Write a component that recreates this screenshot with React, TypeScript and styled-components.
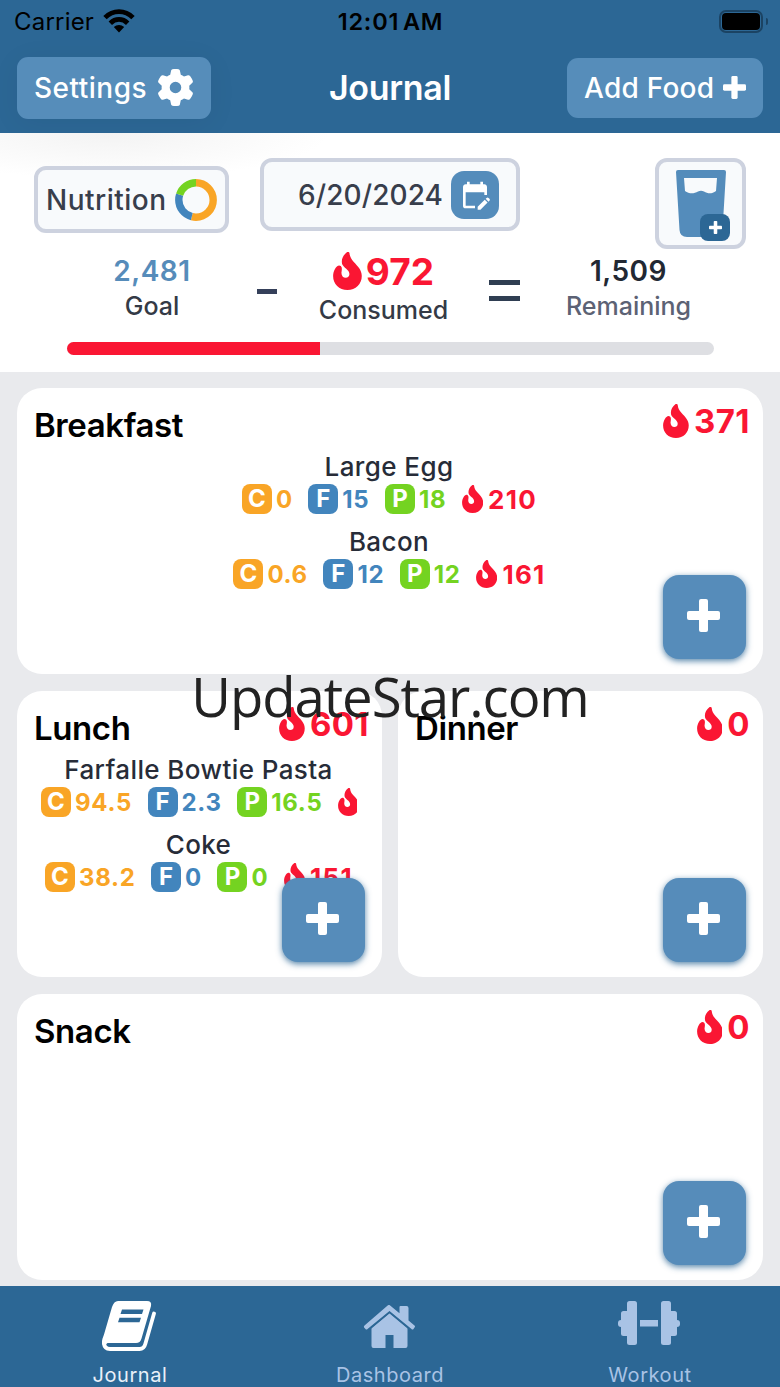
import React from "react";
import styled, { createGlobalStyle } from "styled-components";
import { FaGear } from "react-icons/fa6";
import { MdEditCalendar } from "react-icons/md";

const MEALS = [
  {
    name: "Breakfast",
    total: "371",
    wide: true,
    foods: [
      { name: "Large Egg", c: "0", f: "15", p: "18", kcal: "210" },
      { name: "Bacon", c: "0.6", f: "12", p: "12", kcal: "161" },
    ],
  },
  {
    name: "Lunch",
    total: "601",
    foods: [
      { name: "Farfalle Bowtie Pasta", c: "94.5", f: "2.3", p: "16.5", kcal: "450" },
      { name: "Coke", c: "38.2", f: "0", p: "0", kcal: "151" },
    ],
  },
  { name: "Dinner", total: "0", foods: [] },
  { name: "Snack", total: "0", wide: true, foods: [] },
];

const Plus: React.FC<{ size: number }> = ({ size }) => (
  <svg width={size} height={size} viewBox="0 0 33 33" fill="currentColor">
    <rect x="12" width="9" height="33" rx="2" />
    <rect y="12" width="33" height="9" rx="2" />
  </svg>
);

const Flame: React.FC<{ size: number }> = ({ size }) => (
  <svg width={size * 0.76} height={size} viewBox="0 0 86 114" fill="currentColor">
    <path d="M42 0C29 10 24 23 27 36C31 47 49 53 49 66C49 73 44 77 38 77C30 77 25 71 25 62C26 54 28 47 23 42C17 37 10 43 6 50C2 57 0 64 0 72C0 96 18 114 43 114C68 114 86 96 86 72C86 54 74 43 62 30C54 21 50 13 49 3C48 0 45-1 42 0Z" />
  </svg>
);

const Wifi = () => (
  <svg width="32" height="24" viewBox="0 0 32 24">
    <g fill="none" stroke="#000" strokeWidth="4.800">
      <path d="M2 8.600C10 .6 22 .6 30 8.600" />
      <path d="M7.300 14.200C12.300 9.200 19.700 9.200 24.700 14.200" />
    </g>
    <path d="M10.800 18C13.800 15.200 18.200 15.200 21.200 18L16 23.500Z" />
  </svg>
);

const Donut = () => (
  <svg width="42" height="42" viewBox="0 0 42 42" fill="none" strokeWidth="7.400">
    <g transform="rotate(-90 21 21)">
      <circle cx="21" cy="21" r="17.200" stroke="#f9a526" pathLength="100" strokeDasharray="54 46" />
      <circle cx="21" cy="21" r="17.200" stroke="#4285bd" pathLength="100" strokeDasharray="26 74" strokeDashoffset="-54" />
      <circle cx="21" cy="21" r="17.200" stroke="#74d321" pathLength="100" strokeDasharray="20 80" strokeDashoffset="-80" />
    </g>
  </svg>
);

const Glass = () => (
  <svg width="50" height="67" viewBox="0 0 50 67" fill="#548cbb">
    <path
      fillRule="evenodd"
      d="M2 0H48Q50 0 50 2L46.500 60Q46 67 39 67H11Q4 67 3.500 60L0 2Q0 0 2 0ZM8 8L9 21C13 24 18 24 22 21.500Q25 20 28 21.500C32 24 36 24 40 21L41 8Z"
    />
  </svg>
);

const JournalIcon = () => (
  <svg width="54" height="50" viewBox="0 0 54 50">
    <path
      fill="#fff"
      fillRule="evenodd"
      d="M16 0H45Q50 0 49 5L39.500 37.500Q38.300 42 34 42H5.500Q3.500 43 4 45L2 46Q0 44 0 41Q0 38 2 33.500L10 6Q12 0 16 0ZM20 8.500L18.500 13H40L41.500 8.500ZM17.500 16.800L16 21.200H37.500L39 16.800Z"
    />
    <path
      d="M52 12.500L43.300 43Q42 48 37.500 48H8Q2 48 1.800 41"
      fill="none"
      stroke="#fff"
      strokeWidth="3.800"
      strokeLinecap="round"
    />
  </svg>
);

const HomeIcon = () => (
  <svg width="53" height="43" viewBox="0 0 52 43" fill="currentColor">
    <path d="M26 8L44 23V41Q44 43 42 43H30V30H22V43H10Q8 43 8 41V23Z" />
    <path d="M26 0L36 8.300V2Q36 1 37 1H43Q45 1 45 3V15.500L51 20.500Q52 21.500 51 22.500L50 24Q49 25 48 24L26 6L4 24Q3 25 2 24L.6 22.500Q0 21.500 1 20.500L23 1.500Q26-1 26 0Z" />
    <path d="M5 25L26 7.500L47 25" fill="none" stroke="#2c6795" strokeWidth="1.500" />
  </svg>
);

const DumbbellIcon = () => (
  <svg width="62" height="44" viewBox="0 0 62 44" fill="currentColor">
    <rect x="9" width="10" height="44" rx="2.500" />
    <rect x="3" y="10" width="9" height="25" rx="2.500" />
    <rect y="19" width="6" height="7" rx="3" />
    <rect x="22" y="19" width="18" height="6.500" />
    <rect x="43" width="10" height="44" rx="2.500" />
    <rect x="50" y="10" width="9" height="25" rx="2.500" />
    <rect x="56" y="19" width="6" height="7" rx="3" />
  </svg>
);

export default function App() {
  return (
    <Screen>
      <GlobalStyle />
      <StatusBar>
        <Carrier>
          Carrier <Wifi />
        </Carrier>
        <Clock>12:01 AM</Clock>
        <Battery>
          <BatteryBody />
          <BatteryTip />
        </Battery>
      </StatusBar>
      <NavBar>
        <SettingsButton>
          Settings <FaGear size={37} />
        </SettingsButton>
        <NavTitle>Journal</NavTitle>
        <AddFoodButton>
          Add Food <Plus size={23} />
        </AddFoodButton>
      </NavBar>
      <Summary>
        <Tools>
          <NutritionButton>
            Nutrition <Donut />
          </NutritionButton>
          <DateButton>
            6/20/2024
            <CalendarBadge>
              <MdEditCalendar size={32} />
            </CalendarBadge>
          </DateButton>
          <WaterButton>
            <Glass />
            <WaterPlus>
              <Plus size={13} />
            </WaterPlus>
          </WaterButton>
        </Tools>
        <Equation>
          <Stat>
            <StatValue $color="#568cba">2,481</StatValue>
            <StatLabel>Goal</StatLabel>
          </Stat>
          <Minus />
          <Stat>
            <Consumed>
              <Flame size={38} />
              972
            </Consumed>
            <StatLabel>Consumed</StatLabel>
          </Stat>
          <Equals />
          <Stat>
            <StatValue $color="#222833">1,509</StatValue>
            <StatLabel $muted>Remaining</StatLabel>
          </Stat>
        </Equation>
        <Track>
          <Fill style={{ width: `${(972 / 2481) * 100}%` }} />
        </Track>
      </Summary>
      <Meals>
        {MEALS.map((meal) => (
          <Card key={meal.name} $wide={meal.wide}>
            <CardHeader>
              <MealName>{meal.name}</MealName>
              <MealTotal>
                <Flame size={34} />
                {meal.total}
              </MealTotal>
            </CardHeader>
            <Foods>
              {meal.foods.map((food) => (
                <Food key={food.name}>
                  <FoodName>{food.name}</FoodName>
                  <Macros>
                    <Macro $color="#f9a526">
                      <Letter>C</Letter>
                      {food.c}
                    </Macro>
                    <Macro $color="#4285bd">
                      <Letter>F</Letter>
                      {food.f}
                    </Macro>
                    <Macro $color="#74d321">
                      <Letter>P</Letter>
                      {food.p}
                    </Macro>
                    <Calories>
                      <Flame size={28} />
                      {food.kcal}
                    </Calories>
                  </Macros>
                </Food>
              ))}
            </Foods>
            <AddButton>
              <Plus size={33} />
            </AddButton>
          </Card>
        ))}
      </Meals>
      <TabBar>
        <Tab $active>
          <TabIcon>
            <JournalIcon />
          </TabIcon>
          Journal
        </Tab>
        <Tab>
          <TabIcon $top={19}>
            <HomeIcon />
          </TabIcon>
          Dashboard
        </Tab>
        <Tab>
          <TabIcon>
            <DumbbellIcon />
          </TabIcon>
          Workout
        </Tab>
      </TabBar>
      <Watermark>UpdateStar.com</Watermark>
    </Screen>
  );
}

const GlobalStyle = createGlobalStyle`
  * {
    box-sizing: border-box;
  }
  body {
    margin: 0;
    font-family: Inter, "Liberation Sans", sans-serif;
  }
  svg {
    display: block;
    flex: none;
  }
`;

const Screen = styled.div`
  position: relative;
  display: flex;
  flex-direction: column;
  width: 780px;
  height: 1387px;
  overflow: hidden;
  background: #e9eaed;
`;

const StatusBar = styled.div`
  display: grid;
  grid-template-columns: 1fr auto 1fr;
  align-items: center;
  height: 42px;
  padding: 0 12px 0 14px;
  background: #2c6795;
  color: #000;
`;

const Carrier = styled.div`
  display: flex;
  align-items: center;
  gap: 9px;
  font-size: 24px;
  letter-spacing: 0.2px;
`;

const Clock = styled.div`
  font-size: 23.5px;
  font-weight: 600;
  letter-spacing: 0.8px;
  word-spacing: -3px;
  padding: 1px 1px 0 0;
`;

const Battery = styled.div`
  display: flex;
  align-items: center;
  justify-content: flex-end;
  gap: 3px;
`;

const BatteryBody = styled.div`
  width: 44px;
  height: 23px;
  border: 2px solid #1b4363;
  border-radius: 7px;
  padding: 1px;
  &::after {
    content: "";
    display: block;
    height: 100%;
    border-radius: 4px;
    background: #000;
  }
`;

const BatteryTip = styled.div`
  width: 2px;
  height: 7px;
  border-radius: 0 2px 2px 0;
  background: #1b4363;
`;

const NavBar = styled.div`
  display: grid;
  grid-template-columns: 1fr auto 1fr;
  align-items: center;
  height: 91px;
  padding: 0 17px;
  background: #2c6795;
`;

const NavButton = styled.div`
  display: flex;
  align-items: center;
  border-radius: 11px;
  background: #568dba;
  color: #fff;
  font-size: 28px;
  font-weight: 500;
`;

const SettingsButton = styled(NavButton)`
  width: 194px;
  height: 62px;
  padding-left: 17px;
  gap: 10px;
  letter-spacing: 0.5px;
  box-shadow: 0 4px 30px rgba(0, 0, 0, 0.05);
`;

const AddFoodButton = styled(NavButton)`
  justify-self: end;
  width: 196px;
  height: 60px;
  padding-left: 17px;
  gap: 9px;
  letter-spacing: 0.25px;
`;

const NavTitle = styled.div`
  color: #fff;
  font-size: 34px;
  font-weight: 600;
  letter-spacing: -0.3px;
`;

const Summary = styled.div`
  height: 239px;
  padding-top: 25px;
  background: radial-gradient(ellipse 220px 46px at 110px 0, #f3f3f3, #fff) #fff;
`;

const Tools = styled.div`
  display: flex;
  align-items: flex-start;
  justify-content: space-between;
  height: 91px;
  padding: 0 34px;
`;

const ToolButton = styled.div`
  display: flex;
  align-items: center;
  border: 4px solid #cdd2df;
  border-radius: 12px;
  background: #f8fafc;
  color: #383e4c;
  font-size: 28px;
  font-weight: 500;
`;

const NutritionButton = styled(ToolButton)`
  width: 195px;
  height: 67px;
  margin-top: 8px;
  padding-left: 8px;
  gap: 8px;
  letter-spacing: 0.5px;
`;

const DateButton = styled(ToolButton)`
  width: 260px;
  height: 73px;
  margin-right: 104px;
  padding-left: 34px;
  gap: 8px;
  font-weight: 450;
  letter-spacing: 0.1px;
`;

const CalendarBadge = styled.div`
  display: grid;
  place-items: center;
  width: 48px;
  height: 48px;
  border-radius: 13px;
  background: #548cbb;
  color: #fff;
`;

const WaterButton = styled(ToolButton)`
  position: relative;
  justify-content: center;
  width: 91px;
  height: 91px;
`;

const WaterPlus = styled.div`
  position: absolute;
  right: 12px;
  bottom: 4px;
  display: grid;
  place-items: center;
  width: 30px;
  height: 27px;
  border-radius: 8px;
  background: #2c6795;
  color: #fff;
`;

const Equation = styled.div`
  display: grid;
  grid-template-columns: 190px 40px 193px 73px 151px;
  height: 94px;
  padding-left: 57px;
`;

const Stat = styled.div`
  display: flex;
  flex-direction: column;
  align-items: center;
`;

const StatValue = styled.div<{ $color: string }>`
  margin-top: 4px;
  color: ${(p) => p.$color};
  font-size: 28px;
  font-weight: 600;
  letter-spacing: 0.5px;
  line-height: 36px;
`;

const StatLabel = styled.div<{ $muted?: boolean }>`
  color: ${(p) => (p.$muted ? "#5c6274" : "#343a46")};
  font-size: 25px;
  font-weight: 500;
  line-height: 34px;
`;

const Consumed = styled.div`
  display: flex;
  align-items: center;
  gap: 4px;
  height: 44px;
  color: #fa1633;
  font-size: 37px;
  font-weight: 700;
`;

const Minus = styled.div`
  width: 20px;
  height: 5px;
  margin: 40px 0 0 10px;
  background: #35405a;
`;

const Equals = styled.div`
  width: 31px;
  height: 21px;
  margin: 31px 0 0 9px;
  border: solid #2f3e52;
  border-width: 5px 0;
`;

const Track = styled.div`
  width: 647px;
  height: 13px;
  margin: -1px 0 0 67px;
  border-radius: 7px;
  overflow: hidden;
  background: #dedfe3;
`;

const Fill = styled.div`
  height: 100%;
  background: #fa1633;
`;

const Meals = styled.div`
  flex: 1;
  display: grid;
  grid-template-columns: 365px 365px;
  grid-auto-rows: 286px;
  gap: 17px 16px;
  padding: 16px 17px 0;
`;

const Card = styled.div<{ $wide?: boolean }>`
  position: relative;
  grid-column: ${(p) => (p.$wide ? "1 / -1" : "auto")};
  border-radius: 25px;
  background: #fff;
`;

const CardHeader = styled.div`
  display: flex;
  justify-content: space-between;
  height: 62px;
  padding: 0 13px 0 17px;
`;

const MealName = styled.div`
  color: #000;
  font-size: 33px;
  font-weight: 600;
  letter-spacing: -0.4px;
  line-height: 75px;
`;

const MealTotal = styled.div`
  display: flex;
  align-items: center;
  gap: 5px;
  height: 66px;
  color: #fa1633;
  font-size: 33px;
  font-weight: 700;
  letter-spacing: 0.4px;
`;

const Foods = styled.div`
  margin: 0 25px 0 24px;
  overflow: hidden;
`;

const Food = styled.div`
  height: 75px;
`;

const FoodName = styled.div`
  color: #272c38;
  font-size: 26px;
  font-weight: 450;
  letter-spacing: 0.4px;
  line-height: 33px;
  padding: 0 1px 1px 0;
  text-align: center;
`;

const Macros = styled.div`
  display: flex;
  justify-content: safe center;
  gap: 15.5px;
`;

const Macro = styled.div<{ $color: string }>`
  --tint: ${(p) => p.$color};
  display: flex;
  align-items: center;
  gap: 4px;
  height: 30px;
  color: var(--tint);
  font-size: 24px;
  font-weight: 650;
  letter-spacing: 0.7px;
`;

const Letter = styled.span`
  width: 30px;
  height: 30px;
  border-radius: 8px;
  background: var(--tint);
  color: #fff;
  font-size: 24px;
  font-weight: 700;
  letter-spacing: 0;
  line-height: 29px;
  text-align: center;
`;

const Calories = styled(Macro).attrs({ $color: "#fa1633" })`
  gap: 5px;
  font-size: 26px;
  letter-spacing: 1.3px;
`;

const AddButton = styled.div`
  position: absolute;
  right: 17px;
  bottom: 15px;
  display: grid;
  place-items: center;
  width: 83px;
  height: 84px;
  padding: 0 3px 4px 0;
  border-radius: 16px;
  background: #568cba;
  box-shadow: 0 2px 6px rgba(44, 103, 149, 0.8);
  color: #fff;
`;

const TabBar = styled.div`
  display: grid;
  grid-template-columns: repeat(3, 1fr);
  height: 101px;
  background: #2c6795;
`;

const Tab = styled.div<{ $active?: boolean }>`
  display: flex;
  flex-direction: column;
  align-items: center;
  color: ${(p) => (p.$active ? "#e9f0f9" : "#a9c3e5")};
  font-size: 20px;
  letter-spacing: 0.55px;
`;

const TabIcon = styled.div<{ $top?: number }>`
  height: 77px;
  padding: ${(p) => p.$top ?? 15}px 2px 0 0;
`;

const Watermark = styled.div`
  position: absolute;
  top: 661px;
  left: 0;
  width: 780px;
  color: #222;
  font-family: "Open Sans", "Noto Sans", sans-serif;
  font-size: 54.5px;
  letter-spacing: -1.05px;
  line-height: 70px;
  text-align: center;
`;
